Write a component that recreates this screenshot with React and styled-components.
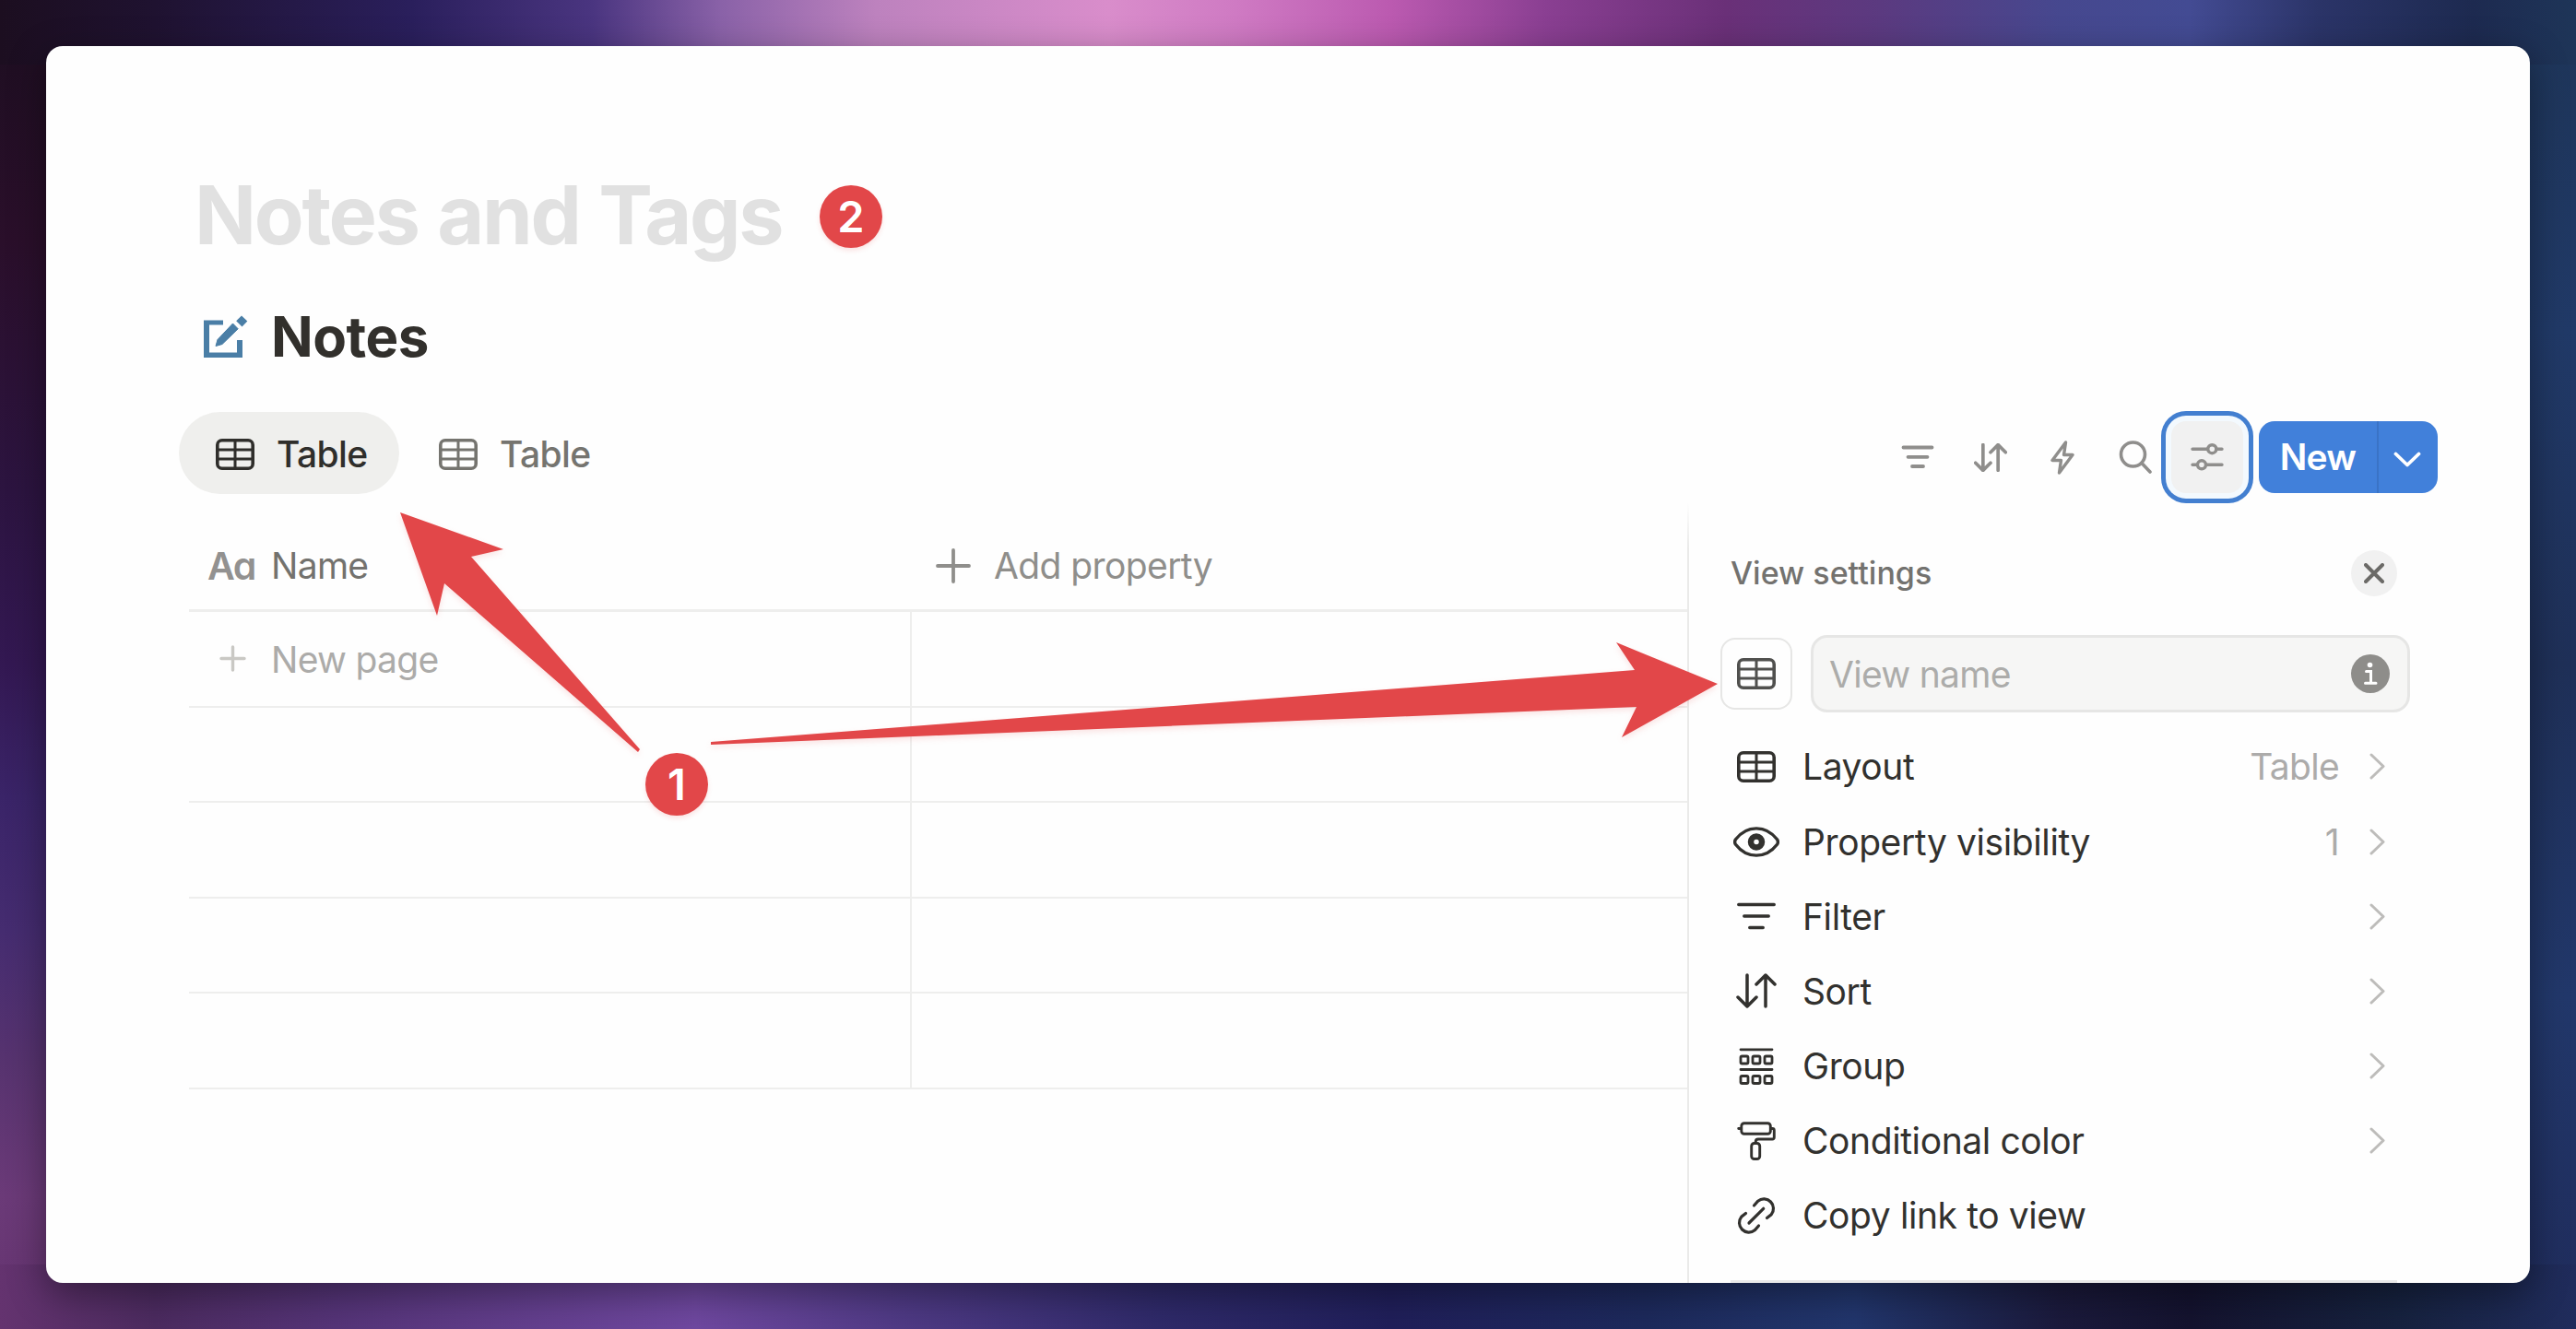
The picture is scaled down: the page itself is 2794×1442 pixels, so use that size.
import React from 'react'
import styled, { createGlobalStyle } from 'styled-components'

const menuItems = [
  { label: 'Layout', icon: <TableIcon />, value: 'Table', arrow: true },
  { label: 'Property visibility', icon: <EyeIcon />, value: '1', arrow: true },
  { label: 'Filter', icon: <FilterIcon />, arrow: true },
  { label: 'Sort', icon: <SortIcon />, arrow: true },
  { label: 'Group', icon: <GroupIcon />, arrow: true },
  { label: 'Conditional color', icon: <RollerIcon />, arrow: true },
  { label: 'Copy link to view', icon: <LinkIcon /> },
]

const emptyRows = [1, 2, 3, 4]

function App() {
  return (
    <Wallpaper>
      <GlobalStyle />
      <Card>
        <Title>Notes and Tags</Title>
        <DatabaseHeading>
          <NoteIcon />
          <DatabaseName>Notes</DatabaseName>
        </DatabaseHeading>
        <Toolbar>
          <Tabs>
            <Tab $active>
              <TableIcon />
              Table
            </Tab>
            <Tab>
              <TableIcon />
              Table
            </Tab>
          </Tabs>
          <Tools>
            <ToolButton><FilterIcon small /></ToolButton>
            <ToolButton><SortIcon small /></ToolButton>
            <ToolButton><BoltIcon /></ToolButton>
            <ToolButton><SearchIcon /></ToolButton>
            <SettingsButton><SlidersIcon /></SettingsButton>
            <NewButton>
              <NewLabel>New</NewLabel>
              <NewMore>
                <svg width="30" height="18" viewBox="0 0 30 18" fill="none" stroke="#fff" strokeWidth="3.8" strokeLinecap="round" strokeLinejoin="round">
                  <path d="M2.5 2.5 15 14.5 27.5 2.5" />
                </svg>
              </NewMore>
            </NewButton>
          </Tools>
        </Toolbar>
        <Body>
          <Table>
            <HeaderRow>
              <NameHead>
                <TextType>Aa</TextType>
                Name
              </NameHead>
              <AddHead>
                <PlusIcon size={38} weight={3.8} />
                Add property
              </AddHead>
            </HeaderRow>
            <Row>
              <NameCell>
                <PlusIcon size={29} weight={3.4} color="#c9c8c4" />
                <NewPage>New page</NewPage>
              </NameCell>
            </Row>
            {emptyRows.map((row) => (
              <Row key={row}>
                <NameCell />
              </Row>
            ))}
          </Table>
          <Panel>
            <PanelHeader>
              <PanelTitle>View settings</PanelTitle>
              <CloseButton>
                <svg width="22" height="22" viewBox="0 0 22 22" fill="none" stroke="#6b6a67" strokeWidth="4" strokeLinecap="round">
                  <path d="M2 2 20 20M20 2 2 20" />
                </svg>
              </CloseButton>
            </PanelHeader>
            <NameRow>
              <IconBox><TableIcon /></IconBox>
              <NameInput>
                <Placeholder>View name</Placeholder>
                <InfoIcon />
              </NameInput>
            </NameRow>
            <Menu>
              {menuItems.map((item) => (
                <MenuItem key={item.label}>
                  <MenuIcon>{item.icon}</MenuIcon>
                  <MenuLabel>{item.label}</MenuLabel>
                  {item.value && <MenuValue>{item.value}</MenuValue>}
                  {item.arrow && <ArrowRight />}
                </MenuItem>
              ))}
            </Menu>
            <Divider />
          </Panel>
        </Body>
      </Card>
      <Arrows width="2794" height="1442" viewBox="0 0 2794 1442">
        <polygon points="434,556 546,596 511,604 694,813 692,816 482,633 474,668" />
        <polygon points="771,805 1773,727 1753,697 1863,742 1759,800 1775,767 771,808" />
      </Arrows>
      <Badge $x={889} $y={201}>2</Badge>
      <Badge $x={700} $y={817}>1</Badge>
    </Wallpaper>
  )
}

export default App

/* icons */

function TableIcon() {
  return (
    <svg width="42" height="34" viewBox="0 0 42 34" fill="none" stroke="currentColor">
      <rect x="1.8" y="1.8" width="38.4" height="30.4" rx="5" strokeWidth="3.6" />
      <path d="M21 2V32M2 12H40M2 22H40" strokeWidth="3" />
    </svg>
  )
}

function NoteIcon() {
  return (
    <svg width="48" height="47" viewBox="0 0 48 47" fill="#4a7ea6">
      <path d="M0 5.500H21V10.500H6V40.500H36V27H42V46H0Z" />
      <path d="M31.500 9 37.200 14.800 20 31.500 13 33.500 15 26.500Z" stroke="#4a7ea6" strokeLinejoin="round" />
      <path d="M41 .5 47.300 6.500 41.500 12.500 35.200 6.300Z" />
    </svg>
  )
}

function FilterIcon({ small }) {
  return small ? (
    <svg width="36" height="26" viewBox="0 0 36 26" fill="none" stroke="currentColor" strokeWidth="3.8" strokeLinecap="round">
      <path d="M2.500 2.500H33.500M7.500 12.800H28.500M12 23H24" />
    </svg>
  ) : (
    <svg width="42" height="30" viewBox="0 0 42 30" fill="none" stroke="currentColor" strokeWidth="3.3" strokeLinecap="round">
      <path d="M1.700 2.500H40.300M7.700 15H34.300M13.700 27.500H28.300" />
    </svg>
  )
}

function SortIcon({ small }) {
  return (
    <svg width={small ? 36 : 44} height={small ? 31 : 38} viewBox="0 0 44 38" fill="none" stroke="currentColor" strokeWidth={small ? 4.5 : 3.5} strokeLinecap="round" strokeLinejoin="round">
      <path d="M12 2V36M2 26 12 36 22 26" />
      <path d="M32 36V2M22 12 32 2 42 12" />
    </svg>
  )
}

function BoltIcon() {
  return (
    <svg width="26" height="37" viewBox="0 0 26 37" fill="none" stroke="currentColor" strokeWidth="3.4" strokeLinejoin="round">
      <path d="M16.500 2 2 21.500H11.500L9.500 35 24 15.500H14.500Z" />
    </svg>
  )
}

function SearchIcon() {
  return (
    <svg width="36" height="36" viewBox="0 0 36 36" fill="none" stroke="currentColor" strokeWidth="3.6" strokeLinecap="round">
      <circle cx="15.500" cy="15" r="13" />
      <path d="M25 24.500 34 34" />
    </svg>
  )
}

function SlidersIcon() {
  return (
    <svg width="36" height="32" viewBox="0 0 36 32" fill="none" stroke="currentColor" strokeWidth="3.4" strokeLinecap="round">
      <path d="M2 7.200H18M28 7.200H34M2 24.300H7M17 24.300H34" />
      <circle cx="23.300" cy="7.200" r="4.500" />
      <circle cx="12" cy="24.300" r="4.500" />
    </svg>
  )
}

function EyeIcon() {
  return (
    <svg width="50" height="33" viewBox="0 0 50 33" fill="none" stroke="currentColor" strokeWidth="3.400">
      <path d="M2.500 13.800C8.500 6 16 1.900 25 1.900S41.500 6 47.500 13.800Q49.300 16.500 47.500 19.200C41.500 27 34 31.100 25 31.100S8.500 27 2.500 19.200Q.7 16.500 2.500 13.800Z" />
      <circle cx="25" cy="16.500" r="6" strokeWidth="6.500" />
    </svg>
  )
}

function GroupIcon() {
  return (
    <svg width="38" height="40" viewBox="0 0 38 40" fill="none" stroke="currentColor" strokeWidth="2.800" strokeLinecap="round">
      <path d="M2 1.800H36M2 23.500H36" />
      <rect x="2" y="9" width="8" height="8" rx="1.500" />
      <rect x="15" y="9" width="8" height="8" rx="1.500" />
      <rect x="28" y="9" width="8" height="8" rx="1.500" />
      <rect x="2" y="30.500" width="8" height="8" rx="1.500" />
      <rect x="15" y="30.500" width="8" height="8" rx="1.500" />
      <rect x="28" y="30.500" width="8" height="8" rx="1.500" />
    </svg>
  )
}

function RollerIcon() {
  return (
    <svg width="42" height="42" viewBox="0 0 42 42" fill="none" stroke="currentColor" strokeWidth="2.900" strokeLinecap="round" strokeLinejoin="round">
      <rect x="4.800" y="1.700" width="31.500" height="11.600" rx="3" />
      <path d="M1.700 7.500H4M37 7.500H38.500Q40.300 7.500 40.300 9.500V17Q40.300 19 38.300 19H23Q20.200 19 20.200 22V23.500" />
      <rect x="15.700" y="23.500" width="9" height="17" rx="3" />
    </svg>
  )
}

function LinkIcon() {
  return (
    <svg width="42" height="42" viewBox="0 0 42 42" fill="none" stroke="currentColor" strokeWidth="3.200" strokeLinecap="round">
      <path d="M13 29 28.700 13.300" />
      <path d="M18.500 10 22.700 5.200A10.350 10.350 0 0 1 37.200 19.800L32.500 23.500" />
      <path d="M9.500 18.500 4.800 22.200A10.350 10.350 0 0 0 19.300 36.800L23.500 32" />
    </svg>
  )
}

function InfoIcon() {
  return (
    <svg width="42" height="42" viewBox="0 0 42 42">
      <circle cx="21" cy="21" r="21" fill="#8e8d8a" />
      <circle cx="20.500" cy="11.500" r="2.800" fill="#fff" />
      <path d="M16.500 18.500H21.500V31M15.500 31.300H27" fill="none" stroke="#fff" strokeWidth="3" strokeLinecap="round" />
    </svg>
  )
}

function PlusIcon({ size, weight, color = 'currentColor' }) {
  return (
    <svg width={size} height={size} viewBox={`0 0 ${size} ${size}`} stroke={color} strokeWidth={weight} strokeLinecap="round">
      <path d={`M${size / 2} 2V${size - 2}M2 ${size / 2}H${size - 2}`} />
    </svg>
  )
}

function ArrowRight() {
  return (
    <svg width="17" height="29" viewBox="0 0 17 29" fill="none" stroke="#bdbcba" strokeWidth="3" strokeLinecap="round" strokeLinejoin="round">
      <path d="M2 2 15 14.500 2 27" />
    </svg>
  )
}

/* styles */

const GlobalStyle = createGlobalStyle`
  * {
    box-sizing: border-box;
  }
  body {
    margin: 0;
    font-family: Inter, "Liberation Sans", sans-serif;
  }
  svg {
    display: block;
    flex: none;
  }
`;
const Wallpaper = styled.main`
  position: relative;
  width: 2794px;
  height: 1442px;
  padding: 50px;
  overflow: hidden;
  background:
    linear-gradient(to right, #1c0e20 0%, #1f1230 6%, #2a1f5c 16%, #4a3580 23%, #8a62a8 28%, #bd82be 34%, #d98dcb 43%, #cf7ac3 48%, #bb5ab0 54%, #8a3f92 60%, #6a3078 67%, #5b3a80 73%, #46488f 80%, #434b93 85%, #2b3468 90%, #1d2a50 96%, #1e3558 100%) top / 100% 70px no-repeat,
    linear-gradient(to right, #64336f 0%, #4c2b60 6%, #553478 13%, #6f48a0 27%, #4f3a85 35%, #2f2a6a 45%, #201f5a 54%, #1d2a5c 64%, #22366d 72%, #1b1a3c 80%, #14132f 85%, #16223f 93%, #202c5c 100%) bottom / 100% 70px no-repeat,
    linear-gradient(to bottom, #1c0e20 0%, #2a0f2a 18%, #2c1440 37%, #331852 50%, #3a2468 60%, #452c70 70%, #57336f 80%, #6b3a78 90%, #64336f 100%) left / 60px 100% no-repeat,
    linear-gradient(to bottom, #1e3558 0%, #213a68 25%, #1f3058 50%, #22386b 75%, #202c5c 100%) right / 60px 100% no-repeat;
`;
const Card = styled.section`
  display: flex;
  flex-direction: column;
  width: 2694px;
  height: 1342px;
  padding-top: 130px;
  overflow: hidden;
  border-radius: 18px;
  background: #fefefe;
  box-shadow: 0 12px 40px rgba(0, 0, 0, 0.4);
`;
const Title = styled.h1`
  margin: 0 0 0 161px;
  font-size: 88px;
  font-weight: 700;
  line-height: 106px;
  letter-spacing: -2.3px;
  word-spacing: 2px;
  color: #e1e1e1;
`;
const DatabaseHeading = styled.div`
  display: flex;
  align-items: center;
  gap: 25px;
  height: 80px;
  margin: 39px 0 0 171px;
`;
const DatabaseName = styled.h2`
  margin: 0;
  font-size: 60px;
  font-weight: 700;
  letter-spacing: -0.5px;
  color: #32302c;
`;
const Toolbar = styled.div`
  display: flex;
  justify-content: space-between;
  height: 100px;
  margin: 41px 100px 0 144px;
`;
const Tabs = styled.div`
  display: flex;
  gap: 3px;
  padding-top: 1px;
`;
const Tab = styled.div`
  display: flex;
  align-items: center;
  gap: 24px;
  width: 239px;
  height: 89px;
  padding: 2px 0 0 40px;
  border-radius: 45px;
  font-size: 39px;
  font-weight: 500;
  letter-spacing: -0.6px;
  color: ${(props) => (props.$active ? '#2f2e2b' : '#75746f')};
  background: ${(props) => (props.$active ? '#efefed' : 'transparent')};
`;
const Tools = styled.div`
  display: flex;
  align-items: center;
`;
const ToolButton = styled.div`
  display: flex;
  align-items: center;
  justify-content: center;
  width: 78.5px;
  height: 78px;
  color: #8f8e8c;
`;
const SettingsButton = styled(ToolButton)`
  width: 78px;
  border-radius: 16px;
  background: #f1f1f1;
  box-shadow: 0 0 0 6px #f3f9fe, 0 0 0 11px #437fd0;
`;
const NewButton = styled.div`
  display: flex;
  height: 78px;
  margin-left: 17px;
  overflow: hidden;
  border-radius: 17px;
  color: #fff;
  background: #4180da;
`;
const NewLabel = styled.div`
  display: flex;
  align-items: center;
  justify-content: center;
  width: 130px;
  padding-bottom: 1px;
  border-right: 2px solid #3a73c6;
  font-size: 39px;
  font-weight: 600;
  letter-spacing: -0.8px;
`;
const NewMore = styled.div`
  display: flex;
  align-items: center;
  width: 64px;
  padding: 6px 0 0 16px;
`;
const Body = styled.div`
  display: flex;
  flex: 1;
`;
const Table = styled.div`
  width: 1625px;
  margin-left: 155px;
  padding-top: 20px;
  font-size: 39px;
  color: #8f8e8b;
`;
const HeaderRow = styled.div`
  display: flex;
  height: 98px;
  border-bottom: 3px solid #eeeeed;
`;
const NameHead = styled.div`
  display: flex;
  align-items: center;
  width: 784px;
  padding-left: 20px;
  letter-spacing: -0.7px;
  color: #73726e;
`;
const TextType = styled.span`
  width: 69px;
  font-size: 41px;
  font-weight: 600;
  font-feature-settings: "cv11";
  letter-spacing: -1.5px;
  color: #929190;
`;
const AddHead = styled.div`
  display: flex;
  align-items: center;
  gap: 25px;
  padding-left: 26px;
  letter-spacing: -0.6px;
`;
const Row = styled.div`
  display: flex;
  height: 103.5px;
  border-bottom: 2px solid #eeeeed;
`;
const NameCell = styled.div`
  display: flex;
  align-items: center;
  gap: 27px;
  width: 784px;
  padding-left: 33px;
  border-right: 2px solid #eeeeed;
`;
const NewPage = styled.span`
  padding-top: 2px;
  letter-spacing: -0.7px;
  color: #acaba9;
`;
const Panel = styled.aside`
  flex: 1;
  padding: 36px 130px 0 34px;
  border-left: 2px solid;
  border-image: linear-gradient(transparent, #eaeae9 50px) 1;
`;
const PanelHeader = styled.div`
  display: flex;
  align-items: center;
  justify-content: space-between;
  height: 80px;
  padding: 0 14px 0 11px;
`;
const PanelTitle = styled.span`
  padding-bottom: 2px;
  font-size: 34px;
  font-weight: 500;
  letter-spacing: 0;
  color: #73726f;
`;
const CloseButton = styled.div`
  display: flex;
  align-items: center;
  justify-content: center;
  width: 50px;
  height: 50px;
  border-radius: 50%;
  background: #f1f1f1;
`;
const NameRow = styled.div`
  display: flex;
  align-items: center;
  gap: 20px;
  margin-top: 27px;
`;
const IconBox = styled.div`
  display: flex;
  align-items: center;
  justify-content: center;
  width: 78px;
  height: 78px;
  border: 2px solid #e6e6e5;
  border-radius: 16px;
  color: #50504e;
`;
const NameInput = styled.div`
  display: flex;
  align-items: center;
  justify-content: space-between;
  flex: 1;
  height: 84px;
  padding: 0 19px 0 17px;
  border: 3px solid #e6e6e5;
  border-radius: 18px;
  background: #f6f6f5;
`;
const Placeholder = styled.span`
  font-size: 39px;
  letter-spacing: -0.7px;
  color: #acacaa;
`;
const Menu = styled.div`
  padding: 18.4px 27px 0 13px;
`;
const MenuItem = styled.div`
  display: flex;
  align-items: center;
  height: 81.15px;
  font-size: 39px;
  letter-spacing: -0.4px;
  color: #32312e;
`;
const MenuIcon = styled.span`
  display: flex;
  justify-content: center;
  width: 52px;
`;
const MenuLabel = styled.span`
  flex: 1;
  margin-left: 24px;
`;
const MenuValue = styled.span`
  margin-right: 33px;
  letter-spacing: -0.7px;
  color: #acabaa;
`;
const Divider = styled.div`
  width: 723px;
  height: 3px;
  margin: 29.5px 0 0 11px;
  background: #e8e8e8;
`;
const Arrows = styled.svg`
  position: absolute;
  top: 0;
  left: 0;
  fill: #e24749;
  filter: drop-shadow(0 3px 3px rgba(226, 71, 73, 0.15));
`;
const Badge = styled.div`
  position: absolute;
  top: ${(props) => props.$y}px;
  left: ${(props) => props.$x}px;
  display: flex;
  align-items: center;
  justify-content: center;
  width: 68px;
  height: 68px;
  padding-bottom: 1px;
  border-radius: 50%;
  font-size: 47px;
  font-weight: 600;
  color: #fff;
  background: #e24749;
  box-shadow: 0 3px 5px rgba(226, 71, 73, 0.15);
`;
